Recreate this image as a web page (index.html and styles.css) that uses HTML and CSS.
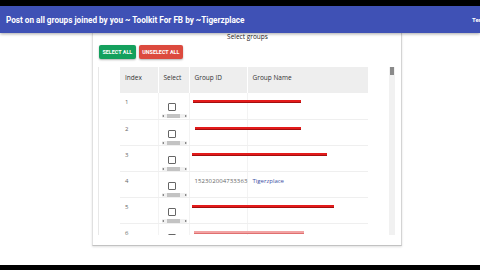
FILE: index.html
```html
<!DOCTYPE html>
<html>
<head>
<meta charset="utf-8">
<title>Post on all groups</title>
<link rel="stylesheet" href="styles.css">
</head>
<body>
<div class="topbar"></div>
<header class="appbar">
  <h1 class="title">Post on all groups joined by you ~ Toolkit For FB by ~Tigerzplace</h1>
  <span class="corner">Ter</span>
</header>
<main class="main">
  <section class="card">
    <div class="card-label">Select groups</div>
    <div class="actions">
      <button class="btn btn-green">SELECT ALL</button>
      <button class="btn btn-red">UNSELECT ALL</button>
    </div>
    <div class="tablewrap">
      <div class="tablescroll">
        <table class="grid">
          <colgroup><col class="c-idx"><col class="c-sel"><col class="c-id"><col class="c-name"></colgroup>
          <thead>
            <tr><th>Index</th><th>Select</th><th>Group ID</th><th>Group Name</th></tr>
          </thead>
          <tbody>
            <tr>
              <td>1</td>
              <td class="sel"><div class="cb"></div><div class="hbar"><span class="arr-l"></span><span class="hthumb"></span><span class="arr-r"></span></div></td>
              <td><div class="redact" style="width:108px;margin-left:-2px"></div></td>
              <td></td>
            </tr>
            <tr>
              <td>2</td>
              <td class="sel"><div class="cb"></div><div class="hbar"><span class="arr-l"></span><span class="hthumb"></span><span class="arr-r"></span></div></td>
              <td><div class="redact" style="width:106px;margin-left:0px"></div></td>
              <td></td>
            </tr>
            <tr>
              <td>3</td>
              <td class="sel"><div class="cb"></div><div class="hbar"><span class="arr-l"></span><span class="hthumb"></span><span class="arr-r"></span></div></td>
              <td><div class="redact" style="width:135px;margin-left:-3px"></div></td>
              <td></td>
            </tr>
            <tr>
              <td>4</td>
              <td class="sel"><div class="cb"></div><div class="hbar"><span class="arr-l"></span><span class="hthumb"></span><span class="arr-r"></span></div></td>
              <td class="gid">152302004733363</td>
              <td><span class="gname">Tigerzplace</span></td>
            </tr>
            <tr>
              <td>5</td>
              <td class="sel"><div class="cb"></div><div class="hbar"><span class="arr-l"></span><span class="hthumb"></span><span class="arr-r"></span></div></td>
              <td><div class="redact" style="width:142px;margin-left:-3px"></div></td>
              <td></td>
            </tr>
            <tr>
              <td>6</td>
              <td class="sel"><div class="cb"></div><div class="hbar"><span class="arr-l"></span><span class="hthumb"></span><span class="arr-r"></span></div></td>
              <td><div class="redact faint" style="width:110px;margin-left:-1px"></div></td>
              <td></td>
            </tr>
          </tbody>
        </table>
      </div>
      <div class="vscroll"><div class="vthumb"></div></div>
    </div>
  </section>
  <div class="submit-row"><button class="btn btn-blue">SUBMIT</button></div>
</main>
<div class="bottombar"></div>
</body>
</html>
```
FILE: styles.css
```css
html, body {
  margin: 0;
  height: 270px;
  overflow: hidden;
  background: #fff;
}
body {
  display: flex;
  flex-direction: column;
  font-family: "Open Sans", "Noto Sans", sans-serif;
}
.topbar {
  flex: none;
  height: 6px;
  background: #000;
}
.appbar {
  flex: none;
  height: 27px;
  background: #3f51b5;
  display: flex;
  align-items: center;
  padding-left: 6px;
  box-shadow: 0 1px 3px rgba(0, 0, 0, 0.35);
  position: relative;
  z-index: 1;
}
.title {
  margin: 2px 0 0;
  font: bold 8.2px/1 "Roboto", sans-serif;
  color: #fff;
  white-space: nowrap;
}
.corner {
  margin-left: auto;
  width: 8px;
  white-space: nowrap;
  font: bold 6px "Roboto", sans-serif;
  color: #fff;
}
.main {
  flex: 1;
  overflow: hidden;
}
.card {
  margin-left: 92px;
  width: 310px;
  height: 213px;
  box-sizing: border-box;
  border-left: 1px solid #e0e0e0;
  border-right: 1px solid #d4d4d4;
  border-bottom: 1px solid #c2c2c2;
  box-shadow: 0 1px 2px rgba(0, 0, 0, 0.12);
  padding: 0 4px 0 5px;
}
.card-label {
  text-align: center;
  font-size: 6.5px;
  line-height: 8px;
  color: #222;
}
.actions {
  display: flex;
  gap: 3px;
  margin-top: 4px;
  padding-left: 1px;
}
.btn {
  border: 0;
  height: 14px;
  padding: 0 3.5px;
  font: bold 5.4px "Roboto", sans-serif;
  color: #fff;
  border-radius: 2px;
  box-shadow: 0 1px 2px rgba(0, 0, 0, 0.3);
}
.btn-green { background: #14a05d; }
.btn-red { background: #dc4a3e; }
.btn-blue { background: #4285f4; }
.tablewrap {
  margin-top: 8px;
  height: 168px;
  display: flex;
  border-left: 1px solid #e8e8e8;
  padding-left: 21px;
}
.tablescroll {
  width: 248px;
  height: 100%;
  overflow: hidden;
}
.vscroll {
  margin-left: 21px;
  width: 6px;
  height: 100%;
  background: #f1f1f1;
}
.vthumb {
  height: 8px;
  margin: 0 1px;
  background: #8a8a8a;
}
.grid {
  border-collapse: collapse;
  table-layout: fixed;
  width: 248px;
  font-size: 6px;
  color: #666;
}
.c-idx { width: 38px; }
.c-sel { width: 31px; }
.c-id { width: 58px; }
.c-name { width: 121px; }
.grid th {
  background: #eee;
  height: 26px;
  box-sizing: border-box;
  padding: 6px 0 0 5px;
  text-align: left;
  vertical-align: top;
  font-weight: normal;
  font-size: 6.5px;
  color: #333;
  border-right: 1px solid #fff;
}
.grid td {
  height: 26px;
  box-sizing: border-box;
  padding: 5px 0 0 5px;
  vertical-align: top;
  border-bottom: 1px solid #efefef;
  border-right: 1px solid #f3f3f3;
}
.grid td.sel {
  padding: 0;
}
.cb {
  width: 6px;
  height: 6px;
  margin: 10px 0 0 9px;
  border: 1px solid #666;
  border-radius: 1px;
  background: #fff;
}
.hbar {
  display: flex;
  align-items: center;
  width: 25px;
  height: 4px;
  margin: 3px 0 0 3px;
  background: #f1f1f1;
}
.arr-l {
  width: 0;
  height: 0;
  border-top: 1.5px solid transparent;
  border-bottom: 1.5px solid transparent;
  border-right: 2px solid #666;
}
.arr-r {
  width: 0;
  height: 0;
  margin-left: auto;
  border-top: 1.5px solid transparent;
  border-bottom: 1.5px solid transparent;
  border-left: 2px solid #666;
}
.hthumb {
  width: 13px;
  height: 4px;
  margin-left: 3px;
  background: #c3c3c3;
}
.redact {
  position: relative;
  z-index: 1;
  height: 2px;
  margin-top: 2px;
  background: #e31b1b;
  border-bottom: 1px solid #a30f0f;
}
.redact.faint {
  background: #f2a3a3;
  border-bottom-color: #e07070;
}
.gid {
  color: #666;
  letter-spacing: 0.1px;
}
.gname {
  color: #3c4ea3;
}
.submit-row {
  margin-left: 92px;
  width: 310px;
  margin-top: 11px;
  text-align: center;
}
.btn-blue {
  padding: 0 4px;
}
.bottombar {
  flex: none;
  height: 5px;
  background: #000;
}
```
